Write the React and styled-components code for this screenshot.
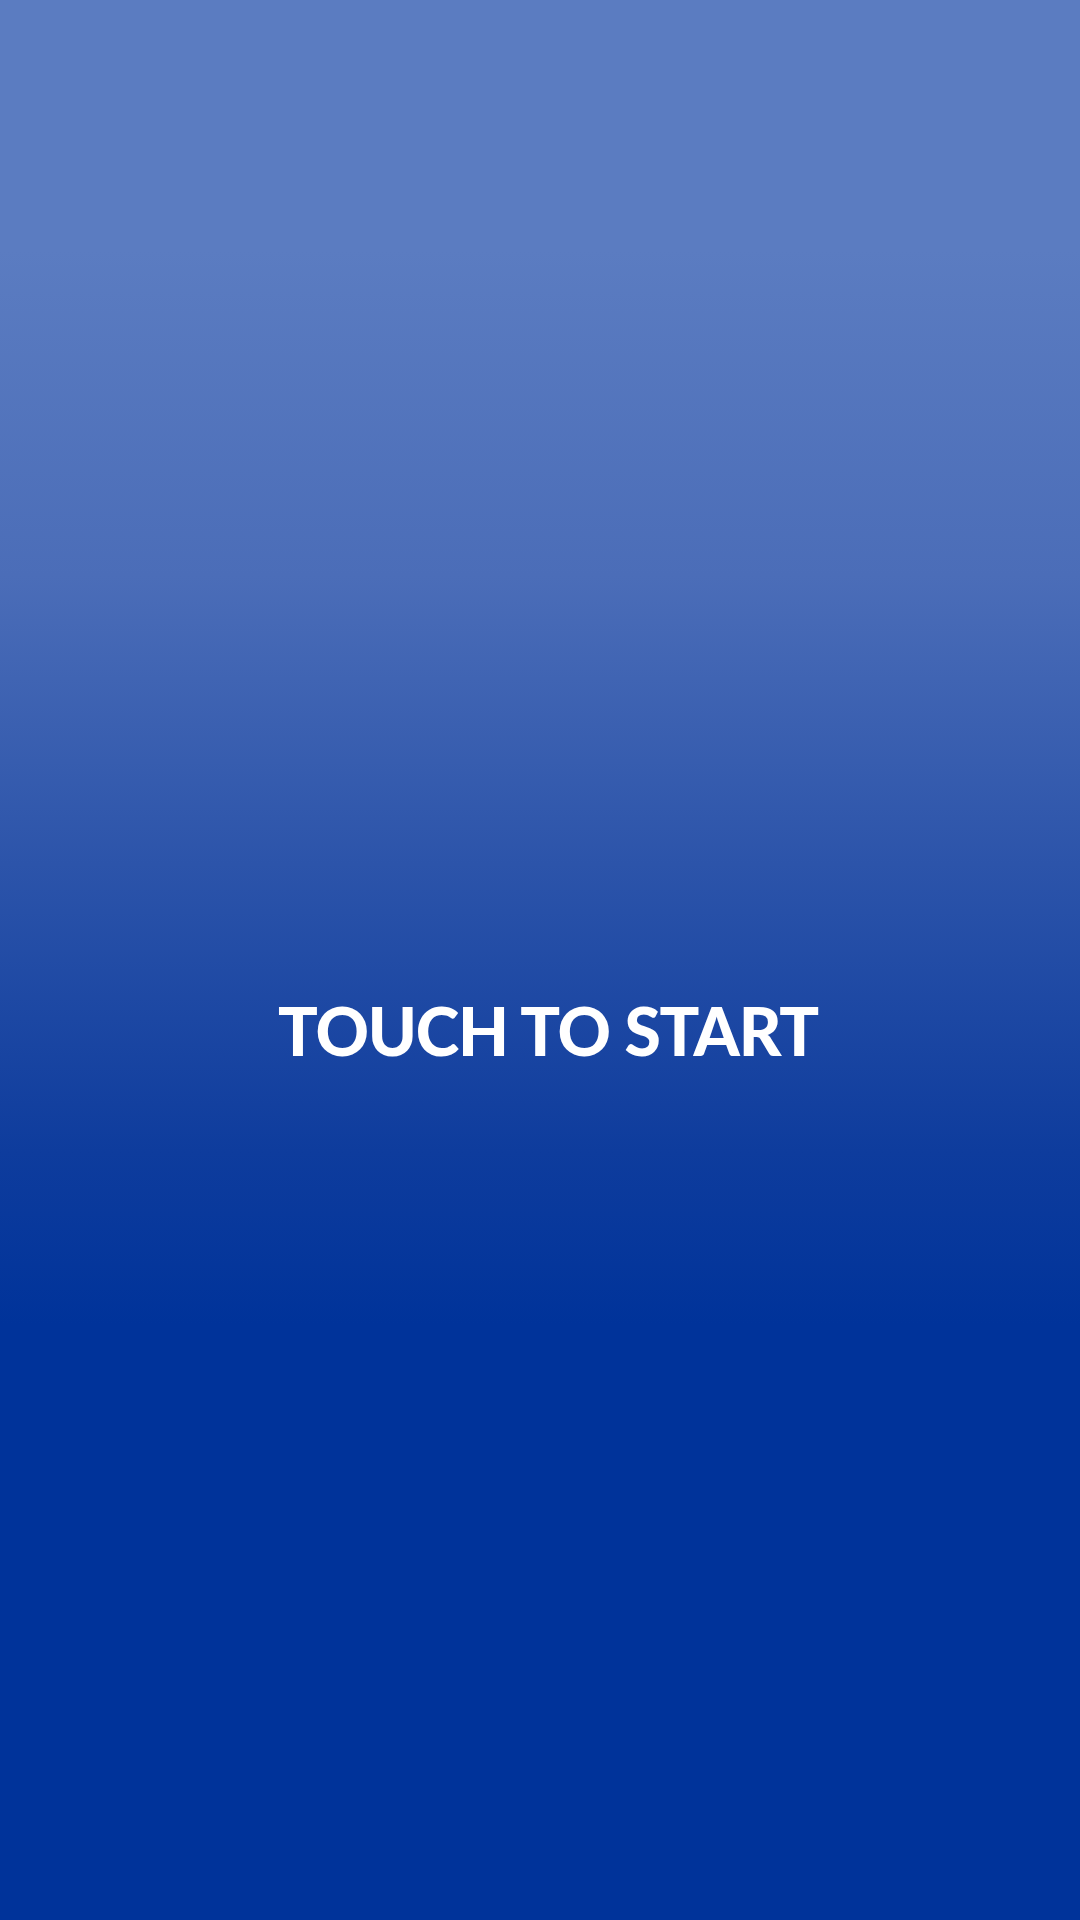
import React from "react";
import styled, { createGlobalStyle } from "styled-components";

const Global = createGlobalStyle`
  html, body { margin: 0; padding: 0; }
  body { width: 1080px; height: 1920px; overflow: hidden; }
`;

const Screen = styled.div`
  width: 1080px;
  height: 1920px;
  display: flex;
  align-items: center;
  justify-content: center;
  background: linear-gradient(
    to bottom,
    #5b7cc1 0%,
    #5b7cc1 13%,
    #4b6db8 30%,
    #2c54aa 45%,
    #0e3c9d 60%,
    #00339a 69%,
    #00339a 100%
  );
`;

const StartLabel = styled.div`
  margin-top: 142px;
  margin-left: 16px;
  color: #ffffff;
  font-family: "Lato", "Open Sans", sans-serif;
  font-weight: 900;
  font-size: 66px;
  letter-spacing: -1.2px;
  line-height: 1;
  white-space: nowrap;
`;

export default function App() {
  return (
    <>
      <Global />
      <Screen>
        <StartLabel>TOUCH TO START</StartLabel>
      </Screen>
    </>
  );
}
